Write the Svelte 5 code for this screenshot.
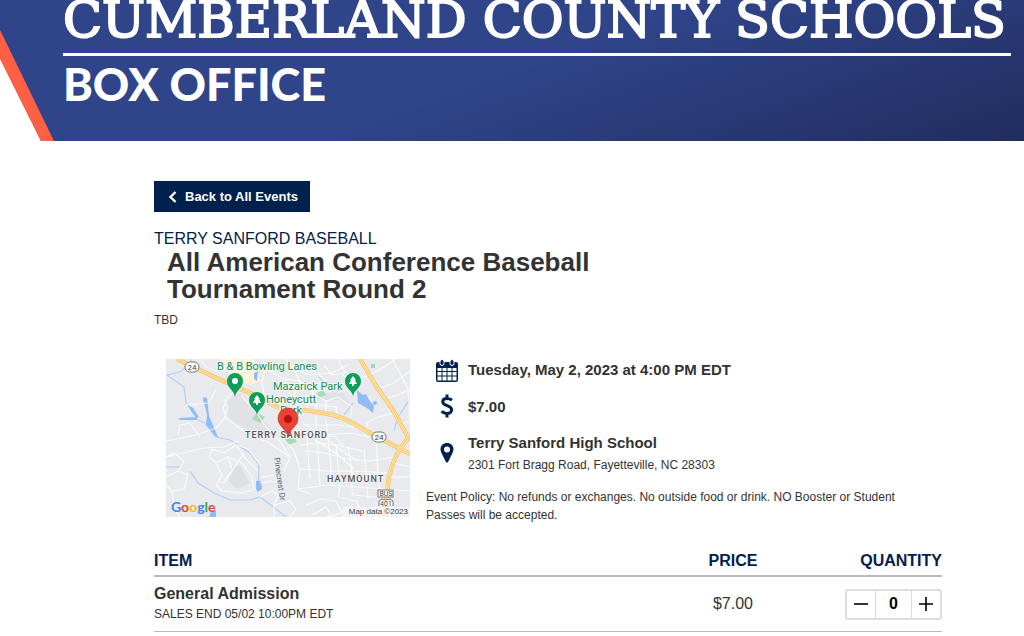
<script lang="ts">
	let quantity = $state(0);

	// minor streets, grouped by rough direction
	const streets = [
		'M0 82 L30 76 L50 69 L58 60 L62 48 L58 40',
		'M0 98 L38 89 L58 88 L72 82',
		'M12 76 L14 66 L24 64 L34 78',
		'M20 46 L42 44 L46 38 L50 30',
		'M34 0 L40 8 L50 12 L58 10 L66 0',
		'M72 28 L62 38 L57 49 L60 58 L72 68 L86 78 L100 82 L124 98',
		'M75 36 L92 56 L100 68 L114 82 L124 98 L118 112',
		'M43 98 L46 90 L58 94 L70 86 L82 90 L96 108',
		'M43 98 L50 104 L56 116 L50 126 L56 132 L76 134 L90 130',
		'M50 104 L62 98 L66 110 L58 124 L52 122',
		'M62 98 L76 104 L86 118 L88 130',
		'M78 94 L70 106 L60 122',
		'M70 86 L80 100 L92 112',
		'M0 118 L12 112 L18 102 L8 94 L0 98',
		'M12 112 L22 116 L18 130 L6 132 L8 150 L14 158',
		'M6 132 L0 126',
		'M94 138 L106 132 L112 136 L108 146 L108 158',
		'M94 124 L104 122 L112 124',
		'M96 118 L112 116',
		'M108 146 L124 142 L130 150 L124 158',
		'M114 76 L128 92 L134 110 L132 130 L146 136',
		'M134 110 L160 112 L190 112 L222 114',
		'M132 130 L162 126 L190 128 L220 130',
		'M138 92 L160 94 L180 100 L204 102 L228 98',
		'M140 70 L142 92 L144 120',
		'M150 60 L152 94 L154 126',
		'M160 62 L164 98 L166 126',
		'M170 86 L174 126 L172 138',
		'M182 88 L186 112 L186 136',
		'M198 90 L200 112 L202 140',
		'M210 84 L212 112 L214 130',
		'M156 76 L176 92 L192 102',
		'M148 80 L172 96 L188 110',
		'M136 64 L156 76 L184 74 L204 78',
		'M140 66 L172 66 L188 68',
		'M138 74 L170 78 L178 88',
		'M134 86 L152 84 L170 86 L196 92',
		'M140 146 L154 140 L170 142 L176 154 L160 158',
		'M146 156 L160 148 L166 158',
		'M172 138 L190 142 L198 156',
		'M186 136 L210 138 L220 136',
		'M222 118 L244 118',
		'M222 130 L244 132',
		'M228 104 L244 108',
		'M120 0 L128 10 L144 16 L166 14 L182 6',
		'M96 0 L104 12 L118 20 L134 22 L148 34',
		'M128 10 L134 24 L128 36',
		'M158 6 L166 16 L176 14 L182 22',
		'M140 0 L148 12 L160 22',
		'M172 0 L178 12 L190 20 L204 16',
		'M146 34 L160 42 L172 38 L186 48 L184 60',
		'M150 46 L150 60',
		'M160 42 L160 56',
		'M140 40 L142 52',
		'M170 48 L172 58',
		'M132 44 L150 46 L172 48',
		'M204 16 L218 8 L230 0',
		'M212 30 L228 24 L244 12',
		'M218 40 L232 36 L244 30',
		'M226 0 L234 14 L242 30 L244 60',
		'M204 76 L200 64 L212 58 L228 54',
		'M232 66 L244 62',
		'M84 0 L86 12 L78 20',
		'M100 6 L96 22 L98 36'
	];

	const highways = [
		'M11 0 L44 16 L84 34 L111 48 C122 52 134 49 150 53 C172 55 182 61 204 74 L244 95',
		'M194 0 L210 27 L227 51 L243 80',
		'M244 77 C232 90 227 102 223 118 L220 142 L219 158'
	];

	const parks = [
		{ x: 91, y: 42 },
		{ x: 187, y: 23 }
	];

	function remove() {
		if (quantity > 0) quantity -= 1;
	}

	function add() {
		quantity += 1;
	}
</script>

<header class="banner">
	<svg class="slant" viewBox="0 0 56 141" aria-hidden="true">
		<path d="M0 58 L41 141 H0 Z" fill="#fff" />
		<path d="M0 30 L54 141 H41 L0 59 Z" fill="#ff5f43" />
	</svg>
	<p class="district">CUMBERLAND COUNTY SCHOOLS</p>
	<p class="office">BOX OFFICE</p>
</header>

<main>
	<a class="back" href="#events">
		<svg width="9" height="12" viewBox="0 0 9 12" aria-hidden="true">
			<path d="M7.500 1 L2.500 6 L7.500 11" fill="none" stroke="#fff" stroke-width="2.400" />
		</svg>
		Back to All Events
	</a>

	<p class="category">TERRY SANFORD BASEBALL</p>
	<h1>All American Conference Baseball Tournament Round 2</h1>
	<p class="opponent">TBD</p>

	<section class="event">
		<svg class="map" viewBox="0 0 244 158" role="img" aria-label="Map of Terry Sanford High School">
			<rect width="244" height="158" fill="#e8eaed" />
			<path d="M60 42 L76 34 L92 56 L110 74 L96 78 L62 60 Z" fill="#e0e2e5" />
			<path d="M64 110 L74 106 L84 124 L72 130 L62 122 Z" fill="#dddfe2" />
			<path d="M148 34 L176 34 L186 46 L168 40 L152 42 Z" fill="#e0e2e5" />
			<path d="M54 0 L88 0 L94 22 L84 26 L66 18 Z" fill="#fef3d6" />
			<g fill="#a8dab5">
				<path d="M91 54 L99 58 L94 64 L86 60 Z" />
				<path d="M151 34 L157 31 L160 36 L153 39 Z" />
				<path d="M118 80 L128 78 L131 83 L122 86 Z" />
				<path d="M205 5 L209 5 L209 9 L205 9 Z" />
			</g>

			<g fill="none" stroke="#b3cffa" stroke-width="1.200">
				<path d="M1 16 L14 13 L24 5 L26 0" />
				<path d="M1 16 L18 28 L20 44 L28 54" />
				<path d="M37 40 L43 58 L40 66 L50 78 L64 81 L84 94 L93 106 L92 132" />
				<path d="M12 60 L30 60 L39 64" />
				<path d="M24 112 L32 124 L48 134 L64 141 L84 141 L94 138 L106 147 L120 158" />
				<path d="M0 108 L14 108" />
				<path d="M140 0 L152 16 L158 24" />
				<path d="M187 44 L178 56" />
				<path d="M244 40 L232 58 L228 72" />
			</g>
			<g fill="#90bcfa">
				<path d="M22 46 L27 49 L33 58 L30 59 L25 52 Z" />
				<path d="M37 38 L41 39 L43 57 L52 78 L49 77 L40 65 L41 56 Z" />
				<path d="M13 59 L31 58 L31 61 L15 61 Z" />
				<path d="M90 122 L95 122 L96 130 L92 133 L90 130 Z" />
				<path d="M191 31 L197 36 L200 35 L203 41 L208 47 L207 54 L201 49 L192 44 Z" />
				<circle cx="209" cy="44" r="2" />
				<path d="M88 14 L92 12 L91 22 L88 20 Z" />
				<path d="M43 158 L45 152 L50 150 L50 158 Z" />
			</g>

			<g fill="none" stroke="#fff" stroke-width="1.200" stroke-linejoin="round" opacity="0.800">
				{#each streets as d}
					<path {d} />
				{/each}
			</g>
			<g fill="none" stroke="#f6bf5a" stroke-width="4.400">
				{#each highways as d}
					<path {d} />
				{/each}
			</g>
			<g fill="none" stroke="#fde4a8" stroke-width="3">
				{#each highways as d}
					<path {d} />
				{/each}
			</g>
			<g fill="none" stroke="#f6c15c" stroke-width="0.700">
				{#each highways as d}
					<path {d} />
				{/each}
			</g>

			<g class="shield">
				<rect x="19" y="3" width="14" height="10" rx="5" />
				<text x="26" y="11">24</text>
				<rect x="206" y="73" width="14" height="10" rx="5" />
				<text x="213" y="81">24</text>
				<rect x="212" y="131" width="15" height="7" />
				<text class="route" x="220" y="137">BUS</text>
				<path d="M213 147 V142 L216 140 L220 141 L224 140 L227 142 V147" />
				<text class="route" x="220" y="147">401</text>
			</g>

			<g class="poi">
				<text x="51" y="11">B &amp; B Bowling Lanes</text>
				<text x="107" y="31">Mazarick Park</text>
				<text x="100" y="44">Honeycutt</text>
				<text x="114" y="55">Park</text>
			</g>
			<text class="place" x="79" y="79">TERRY SANFORD</text>
			<text class="place" x="161" y="123">HAYMOUNT</text>
			<text class="street" transform="translate(108 99) rotate(82)">Pinecrest Dr</text>

			<path d="M69 38 C68 31 61 29 61 22 A8 8 0 0 1 77 22 C77 29 70 31 69 38 Z" fill="#0f9d58" />
			<circle cx="69" cy="22" r="3" fill="#fff" />
			{#each parks as park}
				<g transform={`translate(${park.x} ${park.y})`}>
					<path d="M0 14 C-1 8 -8 6 -8 -1 A8 8 0 0 1 8 -1 C8 6 1 8 0 14 Z" fill="#0f9d58" />
					<path d="M0 -6 L3 -2 H2 L4 2 H1 V4 H-1 V2 H-4 L-2 -2 H-3 Z" fill="#fff" />
				</g>
			{/each}
			<path
				d="M122 78 C121 70 112 68 112 59 A10 10 0 0 1 132 59 C132 68 123 70 122 78 Z"
				fill="#ea4335"
				stroke="#c5221f"
				stroke-width="0.600"
			/>
			<circle cx="122" cy="60" r="4" fill="#b31412" />

			<text class="google" x="5" y="153">
				<tspan fill="#4285f4">G</tspan><tspan fill="#ea4335">o</tspan><tspan fill="#fbbc04">o</tspan><tspan
					fill="#4285f4">g</tspan
				><tspan fill="#34a853">l</tspan><tspan fill="#ea4335">e</tspan>
			</text>
			<rect x="176" y="148" width="68" height="10" fill="#f5f5f5" opacity="0.800" />
			<text class="credit" x="242" y="155">Map data ©2023</text>
		</svg>

		<div class="details">
			<div class="fact date">
				<svg width="22" height="24" viewBox="0 0 22 24" aria-hidden="true">
					<path
						fill="#00214d"
						fill-rule="evenodd"
						d="M2 3 H20 Q22 3 22 5 V21 Q22 23 20 23 H2 Q0 23 0 21 V5 Q0 3 2 3 Z M1.500 9 V12 H5.500 V9 Z M6.500 9 V12 H10.500 V9 Z M11.500 9 V12 H15.500 V9 Z M16.500 9 V12 H20.500 V9 Z M1.500 13 V16.500 H5.500 V13 Z M6.500 13 V16.500 H10.500 V13 Z M11.500 13 V16.500 H15.500 V13 Z M16.500 13 V16.500 H20.500 V13 Z M1.500 17.500 V21.500 H5.500 V17.500 Z M6.500 17.500 V21.500 H10.500 V17.500 Z M11.500 17.500 V21.500 H15.500 V17.500 Z M16.500 17.500 V21.500 H20.500 V17.500 Z"
					/>
					<rect x="4" y="0.500" width="4" height="6" rx="2" fill="#00214d" stroke="#fff" />
					<rect x="14" y="0.500" width="4" height="6" rx="2" fill="#00214d" stroke="#fff" />
				</svg>
				<strong>Tuesday, May 2, 2023 at 4:00 PM EDT</strong>
			</div>
			<div class="fact price">
				<svg width="22" height="24" viewBox="0 0 22 24" aria-hidden="true">
					<path
						d="M16 6.200 C14.500 5 12.700 4.400 10.700 4.400 C8.300 4.400 6.700 5.700 6.700 7.800 C6.700 12.500 15.600 10.800 15.600 15.800 C15.600 18.100 13.600 19.500 11 19.500 C8.700 19.500 6.900 18.600 5.600 17.300 M11 0.500 V4.500 M11 19.500 V23.500"
						fill="none"
						stroke="#00214d"
						stroke-width="3"
					/>
				</svg>
				<strong>$7.00</strong>
			</div>
			<div class="fact venue">
				<svg width="22" height="20" viewBox="0 0 22 20" aria-hidden="true">
					<path
						fill="#00214d"
						fill-rule="evenodd"
						d="M11 0 C14.800 0 17.500 2.700 17.500 6.200 C17.500 7.500 17.200 8.500 16.500 9.900 L12.200 18.700 Q11 20.500 9.800 18.700 L5.500 9.900 C4.800 8.500 4.500 7.500 4.500 6.200 C4.500 2.700 7.200 0 11 0 Z M11 3.400 A3 3 0 1 0 11 9.400 A3 3 0 1 0 11 3.400 Z"
					/>
				</svg>
				<div>
					<strong>Terry Sanford High School</strong>
					<p class="address">2301 Fort Bragg Road, Fayetteville, NC 28303</p>
				</div>
			</div>
			<p class="policy">
				Event Policy: No refunds or exchanges. No outside food or drink. NO Booster or Student Passes
				will be accepted.
			</p>
		</div>
	</section>

	<table>
		<thead>
			<tr>
				<th class="item">ITEM</th>
				<th class="cost">PRICE</th>
				<th class="amount">QUANTITY</th>
			</tr>
		</thead>
		<tbody>
			<tr>
				<td class="item">
					<strong>General Admission</strong>
					<p>SALES END 05/02 10:00PM EDT</p>
				</td>
				<td class="cost">$7.00</td>
				<td class="amount">
					<div class="stepper">
						<button type="button" aria-label="Remove one ticket" onclick={remove}>
							<svg width="14" height="14" viewBox="0 0 14 14" aria-hidden="true">
								<path d="M0 7 H14" stroke="#000" stroke-width="1.600" />
							</svg>
						</button>
						<input type="text" aria-label="Quantity" bind:value={quantity} />
						<button type="button" aria-label="Add one ticket" onclick={add}>
							<svg width="14" height="14" viewBox="0 0 14 14" aria-hidden="true">
								<path d="M0 7 H14 M7 0 V14" stroke="#000" stroke-width="1.600" />
							</svg>
						</button>
					</div>
				</td>
			</tr>
		</tbody>
	</table>
</main>

<style>
	:global(body) {
		margin: 0;
		background: #fff;
		color: #333;
		font-family: 'Liberation Sans', Arial, sans-serif;
	}
	p,
	h1 {
		margin: 0;
	}
	.banner {
		position: relative;
		overflow: hidden;
		box-sizing: border-box;
		padding: 0 13px 33px 63px;
		background: linear-gradient(160deg, #2f4489 50%, #212d5f 100%);
		color: #fff;
		white-space: nowrap;
	}
	.slant {
		position: absolute;
		left: 0;
		bottom: 0;
		width: 56px;
		height: 141px;
	}
	.district {
		padding-bottom: 13px;
		border-bottom: 3px solid #fff;
		font-family: 'DejaVu Serif', serif;
		font-size: 51px;
		line-height: 40px;
		-webkit-text-stroke: 2px #fff;
	}
	.office {
		margin-top: 4px;
		font-family: Lato, sans-serif;
		font-size: 45px;
		font-weight: 900;
		line-height: 48px;
	}
	main {
		margin: 40px 82px 0 154px;
	}
	.back {
		display: inline-flex;
		align-items: center;
		gap: 8px;
		padding: 0 12px 0 14px;
		background: #00214d;
		color: #fff;
		font-size: 13px;
		font-weight: bold;
		line-height: 31px;
		text-decoration: none;
	}
	.category {
		margin-top: 17px;
		color: #00214d;
		font-size: 16px;
		line-height: 20px;
	}
	h1 {
		max-width: 470px;
		padding-left: 13px;
		font-size: 26px;
		line-height: 27px;
	}
	.opponent {
		margin-top: 9px;
		font-size: 12px;
		line-height: 16px;
	}
	.event {
		display: flex;
		align-items: flex-start;
		gap: 16px;
		margin-top: 31px;
		padding-left: 12px;
	}
	.map {
		flex: none;
		width: 244px;
		height: 158px;
	}
	.map text {
		font-family: Roboto, sans-serif;
	}
	.shield {
		fill: #fff;
		stroke: #777;
		stroke-width: 1;
	}
	.shield text {
		fill: #444;
		stroke: none;
		font-size: 8px;
		text-anchor: middle;
	}
	.shield .route {
		font-size: 7px;
	}
	.map .poi text {
		fill: #188a50;
		stroke: #f4f6f5;
		stroke-width: 2;
		paint-order: stroke;
		font-size: 11px;
	}
	.map .place {
		fill: #555;
		stroke: #f1f2f4;
		stroke-width: 2;
		paint-order: stroke;
		font-size: 9px;
		font-weight: 500;
		letter-spacing: 1px;
	}
	.map .street {
		fill: #666;
		font-size: 8px;
	}
	.map .google {
		font-family: Lato, sans-serif;
		font-size: 14px;
		font-weight: bold;
	}
	.map .credit {
		fill: #444;
		font-family: 'Liberation Sans', Arial, sans-serif;
		font-size: 8px;
		text-anchor: end;
	}
	.details {
		flex: 1;
		max-width: 488px;
	}
	.fact {
		display: flex;
		align-items: center;
		gap: 10px;
		padding-left: 10px;
		font-size: 15px;
		line-height: 21px;
	}
	.fact svg {
		flex: none;
	}
	.date {
		align-items: flex-start;
	}
	.price {
		margin-top: 11px;
	}
	.venue {
		margin-top: 13px;
	}
	.venue strong {
		display: block;
		line-height: 24px;
	}
	.address {
		font-size: 12px;
		line-height: 20px;
	}
	.policy {
		margin-top: 13px;
		font-size: 12px;
		line-height: 18px;
	}
	table {
		width: 100%;
		margin-top: 27px;
		border-collapse: collapse;
	}
	th,
	td {
		padding: 0;
		text-align: left;
	}
	th {
		padding-bottom: 4px;
		border-bottom: 2px solid #bbb;
		color: #00214d;
		font-size: 16px;
		line-height: 20px;
	}
	td {
		height: 54px;
		border-bottom: 1px solid #bbb;
		font-size: 16px;
	}
	td p {
		font-size: 12px;
		line-height: 20px;
	}
	td strong {
		font-size: 16px;
		line-height: 20px;
	}
	th.cost,
	td.cost {
		width: 120px;
		text-align: center;
	}
	th.amount,
	td.amount {
		width: 149px;
		text-align: right;
	}
	.stepper {
		display: inline-flex;
		box-sizing: border-box;
		height: 31px;
		border: 2px solid #ddd;
		border-radius: 3px;
		vertical-align: middle;
	}
	.stepper button {
		display: flex;
		align-items: center;
		justify-content: center;
		width: 28px;
		padding: 0;
		border: 0;
		background: #fff;
		cursor: pointer;
	}
	.stepper input {
		box-sizing: border-box;
		width: 37px;
		padding: 0;
		border: 0 solid #ddd;
		border-width: 0 1px;
		color: #000;
		font: bold 16px 'Liberation Sans', Arial, sans-serif;
		text-align: center;
	}
</style>
